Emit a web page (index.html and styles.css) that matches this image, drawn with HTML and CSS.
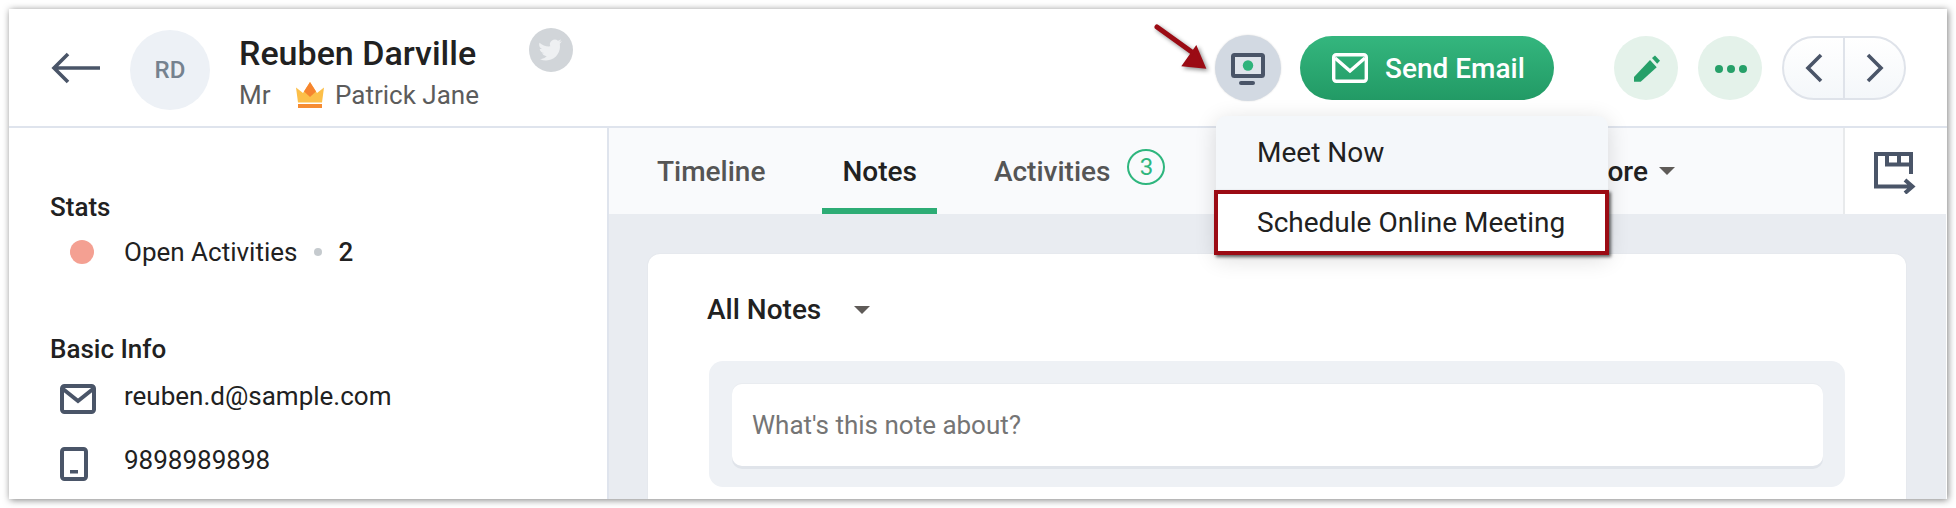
FILE: index.html
```html
<!DOCTYPE html>
<html lang="en">
<head>
    <meta charset="UTF-8">
    <title>Reuben Darville - Contact</title>
    <link rel="stylesheet" href="styles.css">
</head>
<body>
    <div class="frame">
        <header class="header">
            <svg class="back" width="50" height="32" viewBox="0 0 50 32"><path d="M17 2 3 16l14 14M3 16h46" fill="none" stroke="#4a5568" stroke-width="3.6"/></svg>
            <div class="avatar">RD</div>
            <div class="who">
                <div class="name">Reuben Darville</div>
                <div class="sub">
                    <span class="title">Mr</span>
                    <svg class="crown" width="28" height="26" viewBox="0 0 28 26"><path d="M0 5.500 7 11 14 0l7 11 7-5.500-2 15H2z" fill="#fcbf49"/><path d="M14 0l-6 9.500 6 5.500 6-5.500z" fill="#f6842f"/><path d="M2 22h24v4H2z" fill="#f68c32"/></svg>
                    <span>Patrick Jane</span>
                </div>
            </div>
            <div class="twitter">
                <svg width="24" height="24" viewBox="0 0 24 24"><path transform="rotate(-8 12 12)" d="M23.953 4.570a10 10 0 0 1-2.825.775 4.958 4.958 0 0 0 2.163-2.723c-.951.555-2.005.959-3.127 1.184a4.920 4.920 0 0 0-8.384 4.482C7.690 8.095 4.067 6.130 1.640 3.162a4.822 4.822 0 0 0-.666 2.475c0 1.710.870 3.213 2.188 4.096a4.904 4.904 0 0 1-2.228-.616v.060a4.923 4.923 0 0 0 3.946 4.827 4.996 4.996 0 0 1-2.212.085 4.936 4.936 0 0 0 4.604 3.417 9.867 9.867 0 0 1-6.102 2.105c-.390 0-.779-.023-1.170-.067a13.995 13.995 0 0 0 7.557 2.209c9.053 0 13.998-7.496 13.998-13.985 0-.210 0-.420-.015-.630A9.935 9.935 0 0 0 24 4.590z" fill="#eef0f2"/></svg>
            </div>
            <div class="actions">
                <button class="meet">
                    <svg width="34" height="32" viewBox="0 0 34 32"><rect x="2" y="2" width="30" height="21" rx="1.500" fill="#dfe4eb" stroke="#4a5568" stroke-width="4"/><circle cx="17" cy="12.500" r="5.200" fill="#2fb37b"/><rect x="8" y="28" width="16" height="4" rx="2" fill="#4a5568"/></svg>
                </button>
                <button class="send">
                    <svg width="36" height="30" viewBox="0 0 36 30"><rect x="1.700" y="1.700" width="32.600" height="26.600" rx="2.500" fill="none" stroke="#fff" stroke-width="3.400"/><path d="M3 5l15 13L33 5" fill="none" stroke="#fff" stroke-width="3.400"/></svg>
                    <span class="send-label">Send Email</span>
                </button>
                <button class="round edit">
                    <svg width="64" height="64" viewBox="0 0 64 64"><path d="M20 41 36 24l6.700 7.300-16 14.400H20z" fill="#26a069"/><path d="M38 22l3-2.500 5 5.200-2.800 3z" fill="#26a069"/></svg>
                </button>
                <button class="round more-btn">
                    <svg width="64" height="64" viewBox="0 0 64 64"><circle cx="21" cy="33" r="4" fill="#26a069"/><circle cx="33" cy="33" r="4" fill="#26a069"/><circle cx="45" cy="33" r="4" fill="#26a069"/></svg>
                </button>
                <div class="pager">
                    <button><svg width="18" height="30" viewBox="0 0 18 30"><path d="M16 2 3 15l13 13" fill="none" stroke="#4a5568" stroke-width="3.600"/></svg></button>
                    <button><svg width="18" height="30" viewBox="0 0 18 30"><path d="M2 2l13 13L2 28" fill="none" stroke="#4a5568" stroke-width="3.600"/></svg></button>
                </div>
            </div>
        </header>

        <div class="main">
            <aside class="sidebar">
                <h3 class="side-title">Stats</h3>
                <div class="stat">
                    <span class="stat-dot"></span>
                    <span>Open Activities</span>
                    <span class="sep"></span>
                    <b>2</b>
                </div>
                <h3 class="side-title info-title">Basic Info</h3>
                <div class="info-row mail-row">
                    <svg width="36" height="30" viewBox="0 0 36 30"><rect x="2" y="2" width="32" height="26" rx="2.500" fill="none" stroke="#4a5568" stroke-width="4"/><path d="M3 5l15 12L33 5" fill="none" stroke="#4a5568" stroke-width="4"/></svg>
                    <span>reuben.d@sample.com</span>
                </div>
                <div class="info-row phone-row">
                    <svg width="36" height="34" viewBox="0 0 36 34"><rect x="2" y="2" width="24" height="30" rx="2.500" fill="none" stroke="#4a5568" stroke-width="4"/><rect x="10" y="23" width="8" height="3.500" fill="#4a5568"/></svg>
                    <span>9898989898</span>
                </div>
            </aside>

            <section class="content">
                <div class="tabbar">
                    <nav class="tabs">
                        <a class="tab">Timeline</a>
                        <a class="tab active">Notes</a>
                        <a class="tab">Activities<span class="badge">3</span></a>
                        <a class="tab more">More<i class="caret"></i></a>
                    </nav>
                    <div class="export">
                        <svg width="44" height="42" viewBox="0 0 44 42"><path d="M37 22V2H2V34.500H38M13 2V12.500H37M25 2V12.500M31 28l7.500 6.500L31 41" fill="none" stroke="#4a5568" stroke-width="4"/></svg>
                    </div>
                </div>
                <div class="notes-area">
                    <div class="card">
                        <div class="notes-head">All Notes<i class="caret"></i></div>
                        <div class="note-box">
                            <div class="note-input">What's this note about?</div>
                        </div>
                    </div>
                </div>
            </section>
        </div>

        <!-- annotation drawn over the screenshot -->
        <svg class="pointer" width="64" height="48" viewBox="0 0 64 48"><path d="M5 3 44 31" fill="none" stroke="#9b0b14" stroke-width="5" stroke-linecap="round"/><path d="M52 43 32 41 44 24z" fill="#9b0b14" stroke="#9b0b14" stroke-width="3"/></svg>

        <div class="menu">
            <div class="menu-item">Meet Now</div>
            <div class="menu-item picked">Schedule Online Meeting</div>
        </div>
    </div>
</body>
</html>
```

FILE: styles.css
```css
* {
    margin: 0;
    padding: 0;
    box-sizing: border-box;
}

body {
    background: #fff;
    font-family: Roboto, "Liberation Sans", sans-serif;
    color: #212121;
    padding: 9px;
}

button {
    border: 0;
    font-family: inherit;
}

/* outer screenshot frame */
.frame {
    position: relative;
    width: 1938px;
    height: 490px;
    background: #fff;
    box-shadow: 1px 1px 7px rgba(0, 0, 0, 0.5);
}

/* Top header */
.header {
    height: 119px;
    border-bottom: 2px solid #dfe4ed;
    display: flex;
    align-items: center;
    padding-left: 42px;
}

.back {
    margin-top: 1px;
}

.avatar {
    width: 80px;
    height: 80px;
    border-radius: 50%;
    background: #edf1f6;
    color: #75828f;
    font-size: 24px;
    font-weight: 500;
    display: flex;
    align-items: center;
    justify-content: center;
    margin-left: 29px;
    margin-top: 5px;
}

.who {
    margin-left: 29px;
    margin-top: 8px;
}

.name {
    font-size: 34px;
    font-weight: 500;
    line-height: 40px;
}

.sub {
    display: flex;
    align-items: center;
    font-size: 26px;
    line-height: 32px;
    color: #5c5c5c;
    margin-top: 6px;
}

.title {
    width: 57px;
}

.crown {
    margin-right: 11px;
}

.twitter {
    width: 44px;
    height: 44px;
    border-radius: 50%;
    background: #d1d5d9;
    display: flex;
    align-items: center;
    justify-content: center;
    margin-left: 50px;
    margin-bottom: 36px;
}

.actions {
    margin-left: auto;
    display: flex;
    align-items: center;
    padding-right: 41px;
}

.meet {
    width: 66px;
    height: 66px;
    border-radius: 50%;
    background: #d2d9e2;
    display: flex;
    align-items: center;
    justify-content: center;
    padding-top: 2px;
    box-shadow: 0 0 2px rgba(0, 0, 0, 0.15);
}

.send {
    width: 254px;
    height: 64px;
    border-radius: 32px;
    background: linear-gradient(#34b67e, #229a65);
    color: #fff;
    font-size: 28px;
    font-weight: 500;
    display: flex;
    align-items: center;
    gap: 17px;
    padding-left: 32px;
    margin-left: 19px;
    margin-right: 60px;
}

.send-label {
    padding-top: 2px;
}

.round {
    width: 64px;
    height: 64px;
    border-radius: 50%;
    background: #e4f2ea;
    margin-right: 20px;
    display: flex;
}

.pager {
    width: 124px;
    height: 64px;
    border: 2px solid #dfe3ea;
    border-radius: 32px;
    background: linear-gradient(#fff, #f4f7fa);
    display: flex;
}

.pager button {
    background: none;
    flex: 1;
    display: flex;
    align-items: center;
    justify-content: center;
}

.pager button:first-child {
    border-right: 2px solid #dfe3ea;
}

/* Body */
.main {
    display: flex;
    height: 371px;
    overflow: hidden;
}

.sidebar {
    width: 600px;
    border-right: 2px solid #dfe4ed;
    padding: 63px 0 0 41px;
    font-size: 26px;
}

.side-title {
    font-size: 26px;
    font-weight: 500;
    line-height: 32px;
}

.stat {
    display: flex;
    align-items: center;
    height: 40px;
    margin-top: 9px;
}

.stat-dot {
    width: 24px;
    height: 24px;
    border-radius: 50%;
    background: #f4a092;
    margin: 0 30px 0 20px;
}

.sep {
    width: 8px;
    height: 8px;
    border-radius: 50%;
    background: #c5cace;
    margin: 0 16px 0 17px;
}

.stat b {
    font-weight: 500;
}

.info-title {
    margin-top: 61px;
}

.info-row {
    display: flex;
    align-items: center;
    height: 40px;
    padding-left: 10px;
    gap: 28px;
}

.mail-row {
    margin-top: 14px;
}

.mail-row span {
    padding-bottom: 6px;
}

.phone-row {
    margin-top: 25px;
}

.phone-row span {
    padding-bottom: 8px;
}

.content {
    flex: 1;
    display: flex;
    flex-direction: column;
}

/* Tabs */
.tabbar {
    height: 88px;
    display: flex;
    background: #e9ecf1;
}

.tabs {
    flex: 1;
    display: flex;
    background: #f9fafc;
    padding-left: 28px;
    gap: 37px;
}

.tab {
    padding: 0 20px;
    font-size: 28px;
    font-weight: 500;
    color: #555;
    display: flex;
    align-items: center;
}

.tab.active {
    color: #212121;
    border-bottom: 6px solid #2dac75;
    padding-top: 6px;
}

.badge {
    width: 38px;
    height: 36px;
    border: 2px solid #2fb67e;
    border-radius: 50%;
    color: #2fb67e;
    font-size: 24px;
    font-weight: 400;
    display: flex;
    align-items: center;
    justify-content: center;
    margin-left: 17px;
    margin-bottom: 8px;
}

.tab.more {
    margin-left: auto;
    margin-right: 148px;
    color: #212121;
}

.caret {
    display: inline-block;
    border-left: 8px solid transparent;
    border-right: 8px solid transparent;
    border-top: 8px solid #5f5b58;
    margin-left: 11px;
}

.export {
    width: 104px;
    height: 86px;
    background: #fff;
    border-left: 2px solid #e8eaec;
    padding: 24px 0 0 29px;
}

/* Notes card */
.notes-area {
    flex: 1;
    background: #e9ecf1;
    padding: 40px 40px 0 39px;
    border-right: 1px solid #fff;
}

.card {
    height: 300px;
    background: #fff;
    border-radius: 12px;
    box-shadow: 0 0 2px rgba(0, 0, 0, 0.06);
    padding: 38px 61px 0 59px;
}

.notes-head {
    display: flex;
    align-items: center;
    font-size: 28px;
    font-weight: 500;
    line-height: 36px;
}

.notes-head .caret {
    margin-left: 33px;
}

.note-box {
    margin: 33px 0 0 2px;
    height: 126px;
    background: #eef1f5;
    border-radius: 14px;
    padding: 23px 22px 21px 23px;
}

.note-input {
    height: 82px;
    background: #fff;
    border-radius: 10px;
    box-shadow: 0 3px 0 #e0e4ea, 0 -1px 0 #e9ecf0;
    padding-left: 20px;
    display: flex;
    align-items: center;
    font-size: 26px;
    color: #757575;
}

/* annotation and dropdown, both lying over the page */
.pointer {
    position: absolute;
    left: 1143px;
    top: 15px;
    filter: drop-shadow(2px 2px 2px rgba(0, 0, 0, 0.45));
}

.menu {
    position: absolute;
    left: 1207px;
    top: 107px;
    width: 392px;
    background: #f4f7fa;
    border-radius: 10px 10px 0 0;
    box-shadow: 0 4px 22px rgba(0, 0, 0, 0.14);
}

.menu-item {
    height: 74px;
    font-size: 28px;
    padding: 0 0 2px 41px;
    display: flex;
    align-items: center;
}

.menu-item.picked {
    height: 65px;
    margin: 0 -1px 0 -2px;
    padding: 0 0 0 39px;
    background: #fff;
    border: 4px solid #9b0b14;
    box-shadow: 2px 2px 3px rgba(0, 0, 0, 0.6);
}
```
